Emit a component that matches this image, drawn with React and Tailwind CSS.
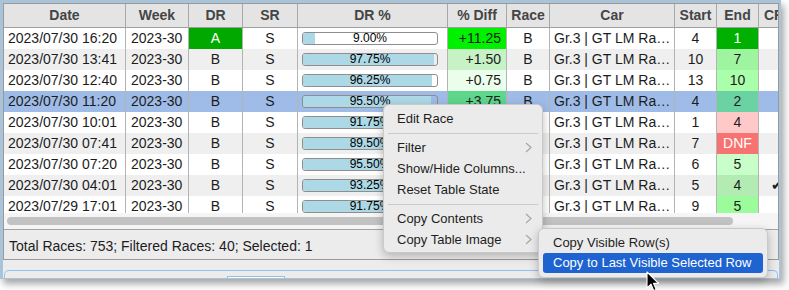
import React from "react";

const W = [122, 63, 54, 55, 150, 59, 43, 125, 42, 42, 60];

const rows = [
  { date: "2023/07/30 16:20", dr: "A", drCls: "bg-[#00a800] text-white", pct: 9.0, diff: "+11.25", diffCls: "bg-[#00f000]", start: "4", end: "1", endCls: "bg-[#00b000] text-white" },
  { date: "2023/07/30 13:41", dr: "B", drCls: "", pct: 97.75, diff: "+1.50", diffCls: "bg-[#c6f2c6]", start: "10", end: "7", endCls: "bg-[#9ff59f]" },
  { date: "2023/07/30 12:40", dr: "B", drCls: "", pct: 96.25, diff: "+0.75", diffCls: "bg-[#ebfdeb]", start: "13", end: "10", endCls: "bg-[#aaffaa]" },
  { date: "2023/07/30 11:20", dr: "B", drCls: "", pct: 95.5, diff: "+3.75", diffCls: "bg-[#5ed68b]", start: "4", end: "2", endCls: "bg-[#6bd3a3]" },
  { date: "2023/07/30 10:01", dr: "B", drCls: "", pct: 91.75, diff: "+0.00", diffCls: "bg-[#f4fff4]", start: "1", end: "4", endCls: "bg-[#ffc9c9]" },
  { date: "2023/07/30 07:41", dr: "B", drCls: "", pct: 89.5, diff: "-1.25", diffCls: "bg-[#ffe0e0]", start: "7", end: "DNF", endCls: "bg-[#f87272] text-white" },
  { date: "2023/07/30 07:20", dr: "B", drCls: "", pct: 95.5, diff: "+2.00", diffCls: "bg-[#b4ecb4]", start: "6", end: "5", endCls: "bg-[#c8ffc8]" },
  { date: "2023/07/30 04:01", dr: "B", drCls: "", pct: 93.25, diff: "+1.00", diffCls: "bg-[#d4f6d4]", start: "5", end: "4", endCls: "bg-[#b3ecb3]" },
  { date: "2023/07/29 17:01", dr: "B", drCls: "", pct: 91.75, diff: "+0.50", diffCls: "bg-[#e6fbe6]", start: "9", end: "5", endCls: "bg-[#9cfc9c]" },
];

const headers = ["Date", "Week", "DR", "SR", "DR %", "% Diff", "Race", "Car", "Start", "End", "CR"];

function Chevron() {
  return (
    <svg width="7" height="11" viewBox="0 0 7 11" className="shrink-0">
      <polyline points="1,1 6,5.5 1,10" fill="none" stroke="#a6a6a6" strokeWidth="1.2" />
    </svg>
  );
}

function MenuItem({ label, sub }) {
  return (
    <div className="h-[21px] flex items-center justify-between pl-[13px] pr-[10px] text-[13px] text-[#1e1e1e]">
      <span>{label}</span>
      {sub && <Chevron />}
    </div>
  );
}

function Sep() {
  return (
    <div className="h-[8px] flex items-center px-[4px]">
      <div className="h-px w-full bg-[#cacaca]" />
    </div>
  );
}

export default function App() {
  return (
    <div className="relative w-[789px] h-[290px] bg-white overflow-hidden font-['Liberation_Sans',Arial,sans-serif]">
      <div className="w-[781px] h-[279px] border-l-[3px] border-t-[3px] border-r-[2px] border-b border-[#a9c4d9] bg-[#ececec] shadow-[3px_5px_7px_rgba(0,0,0,0.35)] flex flex-col">
        <div className="h-[257px] border border-[#9a9a9a] bg-white flex flex-col overflow-hidden">
          {/* header */}
          <div className="h-[24px] flex border-b border-[#a0a0a0] bg-[#e4e4e4] shrink-0">
            {headers.map((h, i) => (
              <div
                key={h}
                style={{ width: W[i] }}
                className={
                  "shrink-0 border-r border-[#a8a8a8] flex items-center text-[14px] font-bold text-[#454545] " +
                  (i === 10 ? "pl-[5px]" : "justify-center")
                }
              >
                {h}
              </div>
            ))}
          </div>
          {/* body */}
          <div className="h-[185px] overflow-hidden shrink-0">
            {rows.map((r, idx) => {
              const sel = idx === 3;
              const rowBg = sel ? "bg-[#9fbce8]" : idx % 2 === 1 ? "bg-[#efefef]" : "bg-white";
              return (
                <div key={idx} className={"h-[21px] flex text-[14px] text-[#1c1c1c] " + rowBg}>
                  <div className="w-[122px] shrink-0 border-r border-[#b4b4b4] flex items-center pl-[4px]">{r.date}</div>
                  <div className="w-[63px] shrink-0 border-r border-[#b4b4b4] flex items-center pl-[5px]">2023-30</div>
                  <div className={"w-[54px] shrink-0 border-r border-[#b4b4b4] flex items-center justify-center " + r.drCls}>{r.dr}</div>
                  <div className="w-[55px] shrink-0 border-r border-[#b4b4b4] flex items-center justify-center">S</div>
                  <div className="w-[150px] shrink-0 border-r border-[#b4b4b4] flex items-center pl-[4px]">
                    <div className="relative w-[136px] h-[13px] border border-[#8e8e8e] rounded-[3px] overflow-hidden flex items-center justify-center">
                      <div className="absolute left-0 top-0 bottom-0 bg-[#add8e6]" style={{ width: r.pct + "%" }} />
                      <span className="relative text-[12px] leading-[11px] text-black">{r.pct.toFixed(2)}%</span>
                    </div>
                  </div>
                  <div className={"w-[59px] shrink-0 border-r border-[#b4b4b4] flex items-center justify-end pr-[5px] " + r.diffCls}>{r.diff}</div>
                  <div className="w-[43px] shrink-0 border-r border-[#b4b4b4] flex items-center justify-center">B</div>
                  <div className="w-[125px] shrink-0 border-r border-[#b4b4b4] flex items-center pl-[4px] whitespace-nowrap">Gr.3 | GT LM Ra…</div>
                  <div className="w-[42px] shrink-0 border-r border-[#b4b4b4] flex items-center justify-center">{r.start}</div>
                  <div className={"w-[42px] shrink-0 border-r border-[#b4b4b4] flex items-center justify-center " + r.endCls}>{r.end}</div>
                  <div className="w-[60px] shrink-0 flex items-center pl-[12px]">{idx === 7 ? "✔" : ""}</div>
                </div>
              );
            })}
          </div>
          {/* scrollbar */}
          <div className="h-[16px] bg-[#f5f5f5] shrink-0 pt-[4px] pl-[3px]">
            <div className="w-[726px] h-[8px] rounded-full bg-[#c2c2c2]" />
          </div>
          {/* status */}
          <div className="h-[30px] border-t border-[#a3a3a3] bg-[#ececec] shrink-0 flex items-center pl-[5px] pt-[3px] text-[14px] text-[#1c1c1c]">
            Total Races: 753; Filtered Races: 40; Selected: 1
          </div>
        </div>
        <div className="flex-1 pt-[10px] pl-[1px] pr-[1px] overflow-hidden">
          <div className="h-full rounded-t-[5px] border-t border-x border-[#8fc0f2] bg-[#ececec] pt-[5px] pl-[222px]">
            <div className="w-[58px] h-[10px] border-t border-x border-[#8fc0f2] bg-white" />
          </div>
        </div>
      </div>

      {/* context menu */}
      <div className="absolute left-[383px] top-[104px] w-[160px] h-[149px] rounded-[6px] border border-[#c9c9c9] bg-[#ebebeb] shadow-[0_3px_10px_rgba(0,0,0,0.25)] py-[3px]">
        <MenuItem label="Edit Race" />
        <Sep />
        <MenuItem label="Filter" sub />
        <MenuItem label="Show/Hide Columns..." />
        <MenuItem label="Reset Table State" />
        <Sep />
        <MenuItem label="Copy Contents" sub />
        <MenuItem label="Copy Table Image" sub />
      </div>

      {/* submenu */}
      <div className="absolute left-[538px] top-[228px] w-[230px] h-[50px] rounded-[6px] border border-[#c9c9c9] bg-[#ebebeb] shadow-[0_3px_10px_rgba(0,0,0,0.25)] pt-[4px] px-[4px]">
        <div className="h-[20px] flex items-center pl-[10px] text-[13px] text-[#1e1e1e]">Copy Visible Row(s)</div>
        <div className="h-[20px] flex items-center pl-[10px] text-[13px] text-white bg-[#1e63d0] rounded-[3px]">Copy to Last Visible Selected Row</div>
      </div>

      {/* cursor */}
      <svg className="absolute left-[646px] top-[271px]" width="14" height="22" viewBox="0 0 14 22">
        <path d="M1,1 L1,17 L5,13.2 L7.8,19.6 L10.2,18.6 L7.5,12.4 L12.6,12.4 Z" fill="#000" stroke="#fff" strokeWidth="1.1" strokeLinejoin="round" />
      </svg>
    </div>
  );
}
